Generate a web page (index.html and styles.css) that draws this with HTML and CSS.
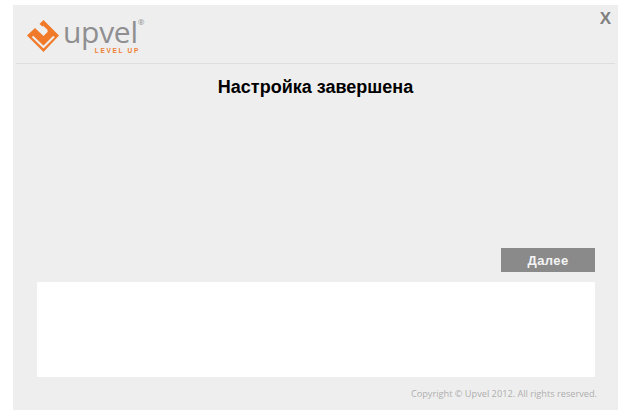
FILE: index.html
```html
<!DOCTYPE html>
<html lang="ru">
<head>
<meta charset="utf-8">
<title>Настройка завершена</title>
<link rel="stylesheet" href="styles.css">
</head>
<body>
<main class="window">
  <header class="header">
    <div class="logo">
      <svg class="logo-mark" width="33" height="34" viewBox="0 0 33 34" aria-hidden="true">
        <path d="M16.500 0 L32 15.500 L16.500 32 L0 15.500 L8 8 L16.500 16 L21 11.500 L12.500 4 Z" fill="#f07a2a"/>
        <path d="M5.500 16.500 L16.500 27 L27 16.500" fill="none" stroke="#eee" stroke-width="2"/>
        <path d="M11 7.500 L16.500 12.800 L19.500 10 L15.500 6.500" fill="none" stroke="#eee" stroke-width="1.800"/>
      </svg>
      <div class="logo-text">
        <span class="logo-name">upvel<sup class="logo-reg">®</sup></span>
        <span class="logo-tag">LEVEL UP</span>
      </div>
    </div>
    <button class="close" type="button">X</button>
  </header>
  <h1 class="title">Настройка завершена</h1>
  <div class="actions">
    <button class="next" type="button">Далее</button>
  </div>
  <div class="log"></div>
  <footer class="copyright">Copyright © Upvel 2012. All rights reserved.</footer>
</main>
</body>
</html>
```
FILE: styles.css
```css
html, body {
  margin: 0;
  height: 100%;
  background: #fff;
}

body {
  padding: 5px 4px 0 13px;
  box-sizing: border-box;
  overflow: hidden;
}

.window {
  height: 405px;
  background: #eee;
  box-sizing: border-box;
  padding: 0 3px;
  display: flex;
  flex-direction: column;
  font-family: "Liberation Sans", Arial, sans-serif;
}

.header {
  height: 59px;
  flex: none;
  box-sizing: border-box;
  border-bottom: 1px solid #dedede;
  display: flex;
  justify-content: space-between;
  align-items: flex-start;
  padding: 7px 4px 0 11px;
}

.logo {
  display: flex;
  gap: 3px;
  align-items: flex-start;
}

.logo-mark {
  margin-top: 8px;
}

.logo-text {
  display: flex;
  flex-direction: column;
  align-items: flex-end;
}

.logo-name {
  font-family: "Open Sans", sans-serif;
  font-size: 30px;
  font-weight: 500;
  line-height: 26px;
  letter-spacing: -0.3px;
  color: #8f8f91;
  margin-top: 7px;
}

.logo-reg {
  font-size: 8px;
  line-height: 0;
  vertical-align: 18px;
}

.logo-tag {
  font-size: 6.500px;
  font-weight: bold;
  line-height: 7px;
  letter-spacing: 1.700px;
  color: #ef7d2e;
  margin: 2px 4px 0 0;
}

.close {
  border: 0;
  background: none;
  padding: 0;
  font-family: "Liberation Sans", Arial, sans-serif;
  font-size: 17px;
  font-weight: bold;
  line-height: 14px;
  color: #808080;
}

.title {
  margin: 13px 0 0;
  font-size: 18px;
  font-weight: bold;
  line-height: 20px;
  text-align: center;
  color: #000;
}

.actions {
  display: flex;
  justify-content: flex-end;
  margin-top: 151px;
  padding-right: 20px;
}

.next {
  width: 94px;
  height: 24px;
  border: 0;
  padding: 0;
  background: #8a8a8a;
  color: #f4f4f4;
  font-family: "Liberation Sans", Arial, sans-serif;
  font-size: 13px;
  font-weight: bold;
  letter-spacing: 0.4px;
}

.log {
  height: 95px;
  margin: 10px 20px 0 21px;
  background: #fff;
}

.copyright {
  margin-top: 11px;
  padding-right: 18px;
  text-align: right;
  font-family: "Open Sans", sans-serif;
  font-size: 9.200px;
  line-height: 12px;
  color: #aeaeae;
}
```
